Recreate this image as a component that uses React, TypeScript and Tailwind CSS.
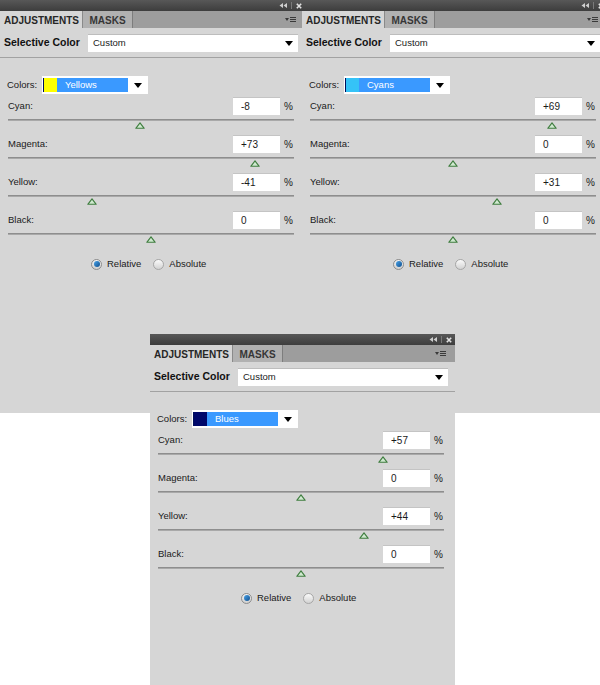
import React from "react";

type PanelProps = {
  swatch: string;
  colorName: string;
  values: number[];
};

const labels = ["Cyan:", "Magenta:", "Yellow:", "Black:"];

const DropArrow = () => (
  <svg width="8" height="5" viewBox="0 0 8 5">
    <path d="M0 0H8L4 5Z" fill="#000" />
  </svg>
);

const Thumb = ({ value }: { value: number }) => (
  <svg
    width="10"
    height="7"
    viewBox="0 0 10 7"
    className="absolute top-[3px]"
    style={{ left: `calc(${((value + 100) / 200) * 100}% - 5px)` }}
  >
    <path
      d="M5 0.8L9.2 6.3H0.8Z"
      fill="#cfe9cf"
      stroke="#3f7d3f"
      strokeWidth="1.1"
      strokeLinejoin="round"
    />
  </svg>
);

const Panel: React.FC<PanelProps> = ({ swatch, colorName, values }) => {
  return (
    <div className="w-[305px] h-[413px] bg-[#d6d6d6] font-['Liberation_Sans',Arial,sans-serif] text-[#1a1a1a]">
      {/* title bar */}
      <div className="h-[11px] bg-gradient-to-b from-[#585858] to-[#3d3d3d] flex items-center justify-end pr-[3px]">
        <svg width="8" height="5" viewBox="0 0 8 5">
          <path d="M4 0L0.5 2.5L4 5ZM8 0L4.5 2.5L8 5Z" fill="#cfcfcf" />
        </svg>
        <div className="w-px h-[7px] bg-[#7a7a7a] mx-[4px]" />
        <svg width="6" height="6" viewBox="0 0 6 6">
          <path d="M0.8 0.8L5.2 5.2M5.2 0.8L0.8 5.2" stroke="#e2e2e2" strokeWidth="1.6" />
        </svg>
      </div>

      {/* tabs */}
      <div className="h-[17px] flex bg-[#9d9d9d] text-[10px] font-bold">
        <div className="w-[83px] bg-[#d6d6d6] pl-[4px] pt-px flex items-center text-[#262626] border-r border-[#8a8a8a]">
          ADJUSTMENTS
        </div>
        <div className="w-[50px] bg-[#b1b1b1] pt-px flex items-center justify-center text-[#363636] border-r border-[#7d7d7d]">
          MASKS
        </div>
        <div className="flex-1 flex items-center justify-end pr-[9px] gap-[1px]">
          <svg width="4" height="3" viewBox="0 0 4 3">
            <path d="M0 0H4L2 3Z" fill="#3a3a3a" />
          </svg>
          <svg width="6" height="6" viewBox="0 0 6 6">
            <path d="M0 0.5H6M0 2.5H6M0 4.5H6" stroke="#3a3a3a" strokeWidth="1" />
          </svg>
        </div>
      </div>

      {/* preset row */}
      <div className="h-[29px] flex items-center pl-[4px]">
        <span className="w-[84px] text-[10.5px] font-bold text-[#111]">Selective Color</span>
        <div className="w-[210px] h-[18px] bg-white border-t border-[#bdbdbd] flex items-center justify-between pl-[5px] pr-[5px] text-[9.5px]">
          <span>Custom</span>
          <DropArrow />
        </div>
      </div>
      <div className="h-px bg-[#a2a2a2]" />

      {/* colors */}
      <div className="mt-[18px] h-[18px] flex items-center text-[9.5px]">
        <span className="w-[42px] pl-[7px]">Colors:</span>
        <div className="w-[106px] h-[18px] bg-white flex items-center pl-[1px]">
          <div className="w-px h-[14px] bg-[#00105a]" />
          <div className="w-[13px] h-[14px]" style={{ background: swatch }} />
          <div className="w-[71px] h-[14px] bg-[#3a99ff] text-white pl-[8px] flex items-center">
            {colorName}
          </div>
          <div className="flex-1 flex justify-center">
            <DropArrow />
          </div>
        </div>
      </div>

      {/* sliders */}
      <div className="mt-[3px]">
        {values.map((v, i) => (
          <div key={labels[i]} className="h-[38px]">
            <div className="h-[18px] flex items-center text-[9.5px]">
              <span className="flex-1 pl-[8px]">{labels[i]}</span>
              <div className="w-[47px] h-[18px] bg-white border-t border-[#c4c4c4] pl-[8px] flex items-center text-[10px]">
                {v > 0 ? `+${v}` : `${v}`}
              </div>
              <span className="w-[25px] pl-[4px] text-[10px]">%</span>
            </div>
            <div className="ml-[8px] mr-[11px] mt-[4px] h-[2px] bg-[#8e8e8e] border-b border-[#a9a9a9] relative">
              <Thumb value={v} />
            </div>
          </div>
        ))}
      </div>

      {/* mode */}
      <div className="h-[30px] flex items-center pl-[91px] text-[9.5px]">
        <div className="w-[11px] h-[11px] rounded-full border border-[#8c8c8c] bg-gradient-to-b from-[#f4f4f4] to-[#cfcfcf] flex items-center justify-center">
          <div className="w-[6px] h-[6px] rounded-full bg-gradient-to-br from-[#4aa3e8] to-[#0d4f8f]" />
        </div>
        <span className="ml-[5px]">Relative</span>
        <div className="ml-[12px] w-[11px] h-[11px] rounded-full border border-[#a6a6a6] bg-gradient-to-b from-[#fbfbfb] to-[#d2d2d2]" />
        <span className="ml-[5px]">Absolute</span>
      </div>
    </div>
  );
};

export default function App() {
  return (
    <div className="relative w-[600px] h-[685px] bg-white overflow-hidden">
      <div className="flex h-[413px] bg-[#d6d6d6]">
        <div className="w-[302px] overflow-hidden">
          <Panel swatch="#ffff00" colorName="Yellows" values={[-8, 73, -41, 0]} />
        </div>
        <div className="w-[298px] overflow-hidden">
          <Panel swatch="#35c3f7" colorName="Cyans" values={[69, 0, 31, 0]} />
        </div>
      </div>
      {/* third window lies over the other two */}
      <div className="absolute left-[150px] top-[334px]">
        <Panel swatch="#00086b" colorName="Blues" values={[57, 0, 44, 0]} />
      </div>
    </div>
  );
}
